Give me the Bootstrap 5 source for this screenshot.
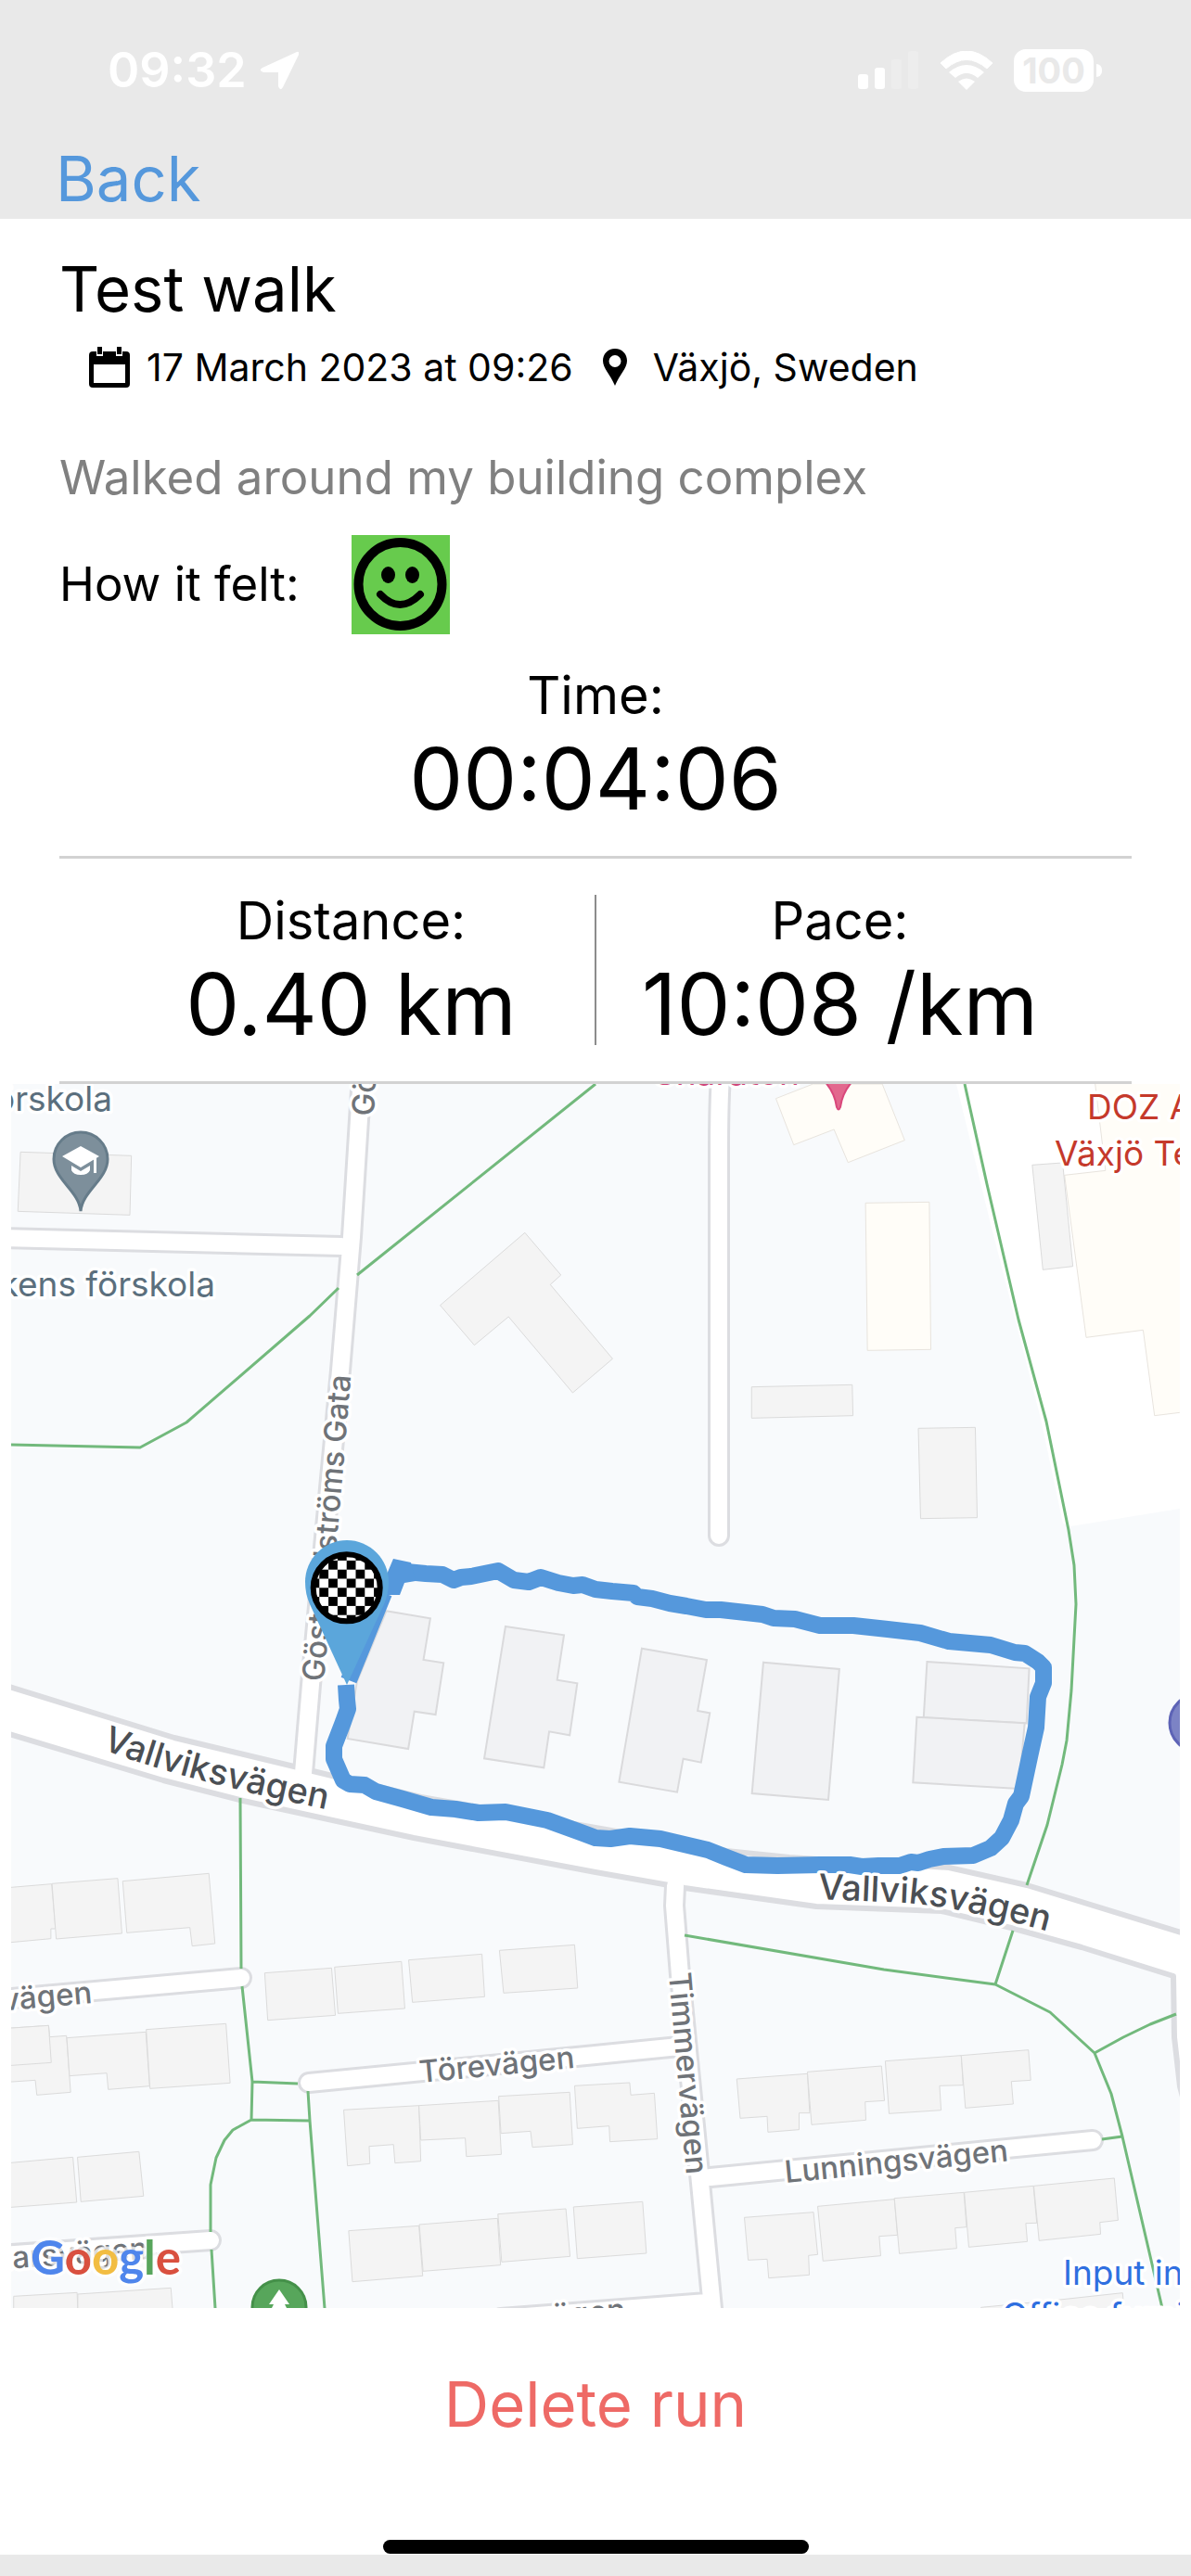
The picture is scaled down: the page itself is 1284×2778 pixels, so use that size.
<!DOCTYPE html>
<html lang="en">
<head>
<meta charset="utf-8">
<meta name="viewport" content="width=device-width, initial-scale=1">
<title>Test walk</title>
<link href="https://cdn.jsdelivr.net/npm/bootstrap@5.3.0/dist/css/bootstrap.min.css" rel="stylesheet">
<style>
  body { font-family: Inter, "Liberation Sans", sans-serif; background: #fff; color: #000; }
  .chrome { background: #e9e9e9; }
  .status-bar { padding: 46px 96px 0 116px; line-height: 60px; font-size: 52px; font-weight: 600; color: #fff; }
  .clock { gap: 14px; }
  .indicators { gap: 22px; }
  .battery { width: 86px; height: 46px; border-radius: 13px; background: #fff; color: #e9e9e9; font-size: 38px; line-height: 46px; font-weight: 700; }
  .battery-tip { width: 6px; height: 14px; border-radius: 0 6px 6px 0; background: #fff; margin-left: 3px; }
  .back-row { padding: 44px 60px 0; }
  .back-link { color: #5598dc; font-size: 67px; line-height: 86px; }
  .run-head { padding: 31px 64px 0; }
  .run-title { font-size: 67px; line-height: 90px; font-weight: 400; margin: 0 0 9px; }
  .run-meta { font-size: 41px; line-height: 60px; padding-left: 32px; }
  .meta-date { margin: 0 32px 0 18px; }
  .meta-place { margin-left: 28px; }
  .run-note { font-size: 51px; line-height: 70px; color: #808080; margin: 54px 0 27px; }
  .felt { font-size: 51px; gap: 56px; }
  .felt-face { width: 106px; height: 107px; background: #67cb4d; }
  .stat-name { font-size: 56px; line-height: 56px; }
  .stat-value { font-size: 92px; line-height: 124px; }
  .time-block { padding-top: 38px; margin-bottom: 21px; }
  .rule { height: 3px; background: #d2d2d2; margin: 0 64px; }
  .split { margin: 39px 116px 21px; }
  .split-line { width: 2px; height: 162px; background: #8c8c8c; }
  .map-frame { padding: 0 12px; }
  .map { display: block; width: 100%; height: auto; background: #f8fafc; font-family: Inter, "Liberation Sans", sans-serif; }
  .casing { fill: none; stroke: #dcdde1; stroke-width: 24; stroke-linecap: round; stroke-linejoin: round; }
  .surface { fill: none; stroke: #fff; stroke-width: 18; stroke-linecap: round; stroke-linejoin: round; }
  .path-green { fill: none; stroke: #72b97c; stroke-width: 3; stroke-linejoin: round; }
  .house polygon { fill: #f4f4f4; stroke: #dbdbdb; stroke-width: 1; vector-effect: non-scaling-stroke; }
  .block polygon { fill: #f1f2f4; stroke: #dadadc; stroke-width: 2; vector-effect: non-scaling-stroke; }
  .shop polygon { fill: #fffdf8; stroke: #e8e4de; stroke-width: 1; vector-effect: non-scaling-stroke; }
  .halo { paint-order: stroke; stroke: #fff; stroke-width: 7; stroke-linejoin: round; }
  .street { font-size: 33px; font-weight: 500; fill: #6f7378; }
  .avenue { font-size: 38px; font-weight: 500; fill: #4b4f54; }
  .place { font-size: 37px; }
  .brand { font-family: Lato, "Liberation Sans", sans-serif; font-size: 51px; font-weight: 700; stroke-opacity: .75; }
  .delete-btn { color: #ee6a66; font-size: 67px; line-height: 100px; margin-top: 54px; }
  .home-bar { width: 459px; height: 15px; border-radius: 8px; background: #000; margin: 96px auto 1px; }
  .bottom-strip { height: 23px; }
</style>
</head>
<body>
<header class="chrome">
  <div class="status-bar d-flex justify-content-between align-items-center">
    <div class="clock d-flex align-items-center">
      <span>09:32</span>
      <svg width="42" height="42" viewBox="0 0 42 42" aria-hidden="true"><path d="M40 1Q43 0 42 4L25 39Q22 44 20 38V23H4Q-2 21 3 18Z" fill="#fff"/></svg>
    </div>
    <div class="indicators d-flex align-items-center">
      <svg width="66" height="42" viewBox="0 0 66 42" aria-hidden="true"><g fill="#fff"><rect x="0" y="25" width="11" height="16" rx="3"/><rect x="18" y="18" width="11" height="23" rx="3"/><g fill="#ededed"><rect x="36" y="9" width="11" height="32" rx="3"/><rect x="54" y="0" width="11" height="41" rx="3"/></g></g></svg>
      <svg width="58" height="42" viewBox="0 0 58 42" aria-hidden="true"><g fill="#fff"><path d="M1 13Q29-13 57 13L51 19Q29 0 7 19Z" stroke="#fff" stroke-width="1"/><path d="M10 23Q29 7 48 23L41 29Q29 19 17 29Z"/><path d="M20 33Q29 26 38 33L29 42Z"/></g></svg>
      <div class="d-flex align-items-center"><div class="battery d-flex justify-content-center">100</div><div class="battery-tip"></div></div>
    </div>
  </div>
  <nav class="back-row d-flex"><a class="back-link text-decoration-none" href="#">Back</a></nav>
</header>
<main>
  <section class="run-head">
    <h1 class="run-title">Test walk</h1>
    <div class="run-meta d-flex align-items-center">
      <svg width="44" height="44" viewBox="0 0 44 44" aria-hidden="true"><path d="M4 5H8V10H15V5H29V10H36V5H40Q44 5 44 9V40Q44 44 40 44H4Q0 44 0 40V9Q0 5 4 5ZM5 19V39H39V19Z" fill-rule="evenodd"/><path d="M9 0H14V8H9ZM30 0H35V8H30Z"/></svg>
      <span class="meta-date">17 March 2023 at 09:26</span>
      <svg width="26" height="40" viewBox="0 0 26 40" aria-hidden="true"><path d="M13 0C5 0 0 6 0 13C0 21 8 28 13 40C18 28 26 21 26 13C26 6 21 0 13 0ZM13 7A6 6 0 1 1 13 20A6 6 0 1 1 13 7Z" fill-rule="evenodd"/></svg>
      <span class="meta-place">Växjö, Sweden</span>
    </div>
    <p class="run-note">Walked around my building complex</p>
    <div class="felt d-flex align-items-center">
      <span>How it felt:</span>
      <svg class="felt-face" viewBox="0 0 106 107" role="img" aria-label="Happy"><circle cx="52.500" cy="53" r="45" fill="none" stroke="#000" stroke-width="10"/><ellipse cx="39.500" cy="43" rx="7.500" ry="9"/><ellipse cx="65.500" cy="43" rx="7.500" ry="9"/><path d="M31 64Q52 86 74 64" fill="none" stroke="#000" stroke-width="8" stroke-linecap="round"/></svg>
    </div>
  </section>
  <section class="time-block text-center">
    <div class="stat-name">Time:</div>
    <div class="stat-value">00:04:06</div>
  </section>
  <div class="rule"></div>
  <section class="split d-flex text-center">
    <div class="flex-fill w-50"><div class="stat-name">Distance:</div><div class="stat-value text-nowrap">0.40 km</div></div>
    <div class="split-line"></div>
    <div class="flex-fill w-50"><div class="stat-name">Pace:</div><div class="stat-value text-nowrap">10:08 /km</div></div>
  </section>
  <div class="rule"></div>
  <section class="map-frame">
    <svg class="map" viewBox="12 1169 1260 1320" role="img" aria-label="Map of the route">
      <defs>
        <pattern id="chequer" x="373.700" y="1712.300" width="19.600" height="19.600" patternUnits="userSpaceOnUse"><rect width="19.600" height="19.600" fill="#fff"/><rect y="9.800" width="9.800" height="9.800"/><rect x="9.800" width="9.800" height="9.800"/></pattern>
        <path id="gata" d="M349 1814Q366 1640 380 1460"/>
        <path id="vall-west" d="M110 1886Q200 1922 400 1961"/>
        <path id="vall-east" d="M882 2048L975 2052Q1040 2056 1170 2094"/>
        <path id="timmer" d="M721 2128L742 2370"/>
        <path id="tore" d="M453 2246L640 2228"/>
        <path id="lunning" d="M847 2354L1120 2327"/>
      </defs>
      <!-- open ground east of the footpath -->
      <polygon fill="#fff" points="1031,1169 1068,1320 1122,1530 1146,1643 1154,1646 1272,1627 1272,1169"/>

      <!-- buildings, one group per map tile -->
      <g transform="translate(0 1150) scale(.40944 .33333)">
        <g class="house"><polygon points="54,277 346,289 342,481 47,469"/><polygon points="1382,538 1477,675 1449,706 1613,946 1508,1056 1339,810 1249,902 1159,773"/></g>
      </g>
      <g transform="translate(642 1150) scale(.40944 .33333)">
        <g class="shop"><polygon points="475,104 573,57 755,57 814,239 665,311 628,204 522,254"/><polygon points="711,442 879,439 883,916 716,919"/><polygon points="1315,50 1343,337 1235,352 1292,877 1442,853 1472,1130 1538,1120 1560,1120 1560,50"/></g>
        <g class="house"><polygon points="411,1037 676,1030 678,1130 411,1138"/><polygon points="850,1171 1000,1168 1005,1460 856,1463"/><polygon points="1150,319 1230,312 1257,647 1178,658"/></g>
      </g>
      <g class="block" transform="translate(0 1600) scale(.40944 .33333)"><polygon points="1017,412 1133,436 1115,570 1168,580 1147,747 1091,737 1075,858 915,825 940,640"/><polygon points="1331,462 1485,490 1467,635 1520,646 1500,814 1446,802 1432,919 1275,889"/></g>
      <g class="block" transform="translate(642 1600) scale(.40944 .33333)"><polygon points="122,533 293,570 269,735 301,742 278,902 231,890 215,998 62,965"/><polygon points="442,578 642,600 613,1023 412,1002"/><polygon points="873,576 1142,598 1135,775 864,757"/><polygon points="846,755 1130,775 1115,987 836,967"/></g>
      <g class="house" transform="translate(0 1600) scale(.40944 .33333)"><polygon points="20,1307 136,1295 146,1440 134,1440 134,1472 20,1485"/><polygon points="137,1294 310,1277 321,1455 148,1473"/><polygon points="323,1286 550,1261 566,1488 506,1496 500,1436 334,1453"/></g>
      <g class="house" transform="translate(0 2050) scale(.40944 .33333)">
        <polygon points="697,233 873,217 883,370 705,386"/><polygon points="881,214 1057,196 1066,348 890,364"/><polygon points="1076,191 1269,172 1276,310 1086,328"/><polygon points="1315,160 1513,142 1521,282 1326,298"/>
        <polygon points="20,412 128,403 131,440 175,436 186,619 97,628 93,580 20,586"/><polygon points="20,412 128,403 135,523 20,533"/><polygon points="176,443 384,424 394,599 285,610 281,557 183,566"/><polygon points="385,416 595,397 606,589 395,607"/>
        <polygon points="20,848 192,829 202,975 20,992"/><polygon points="204,829 366,811 378,955 213,973"/><polygon points="36,1279 203,1267 205,1330 36,1330"/><polygon points="205,1272 450,1252 455,1330 205,1330"/>
        <polygon points="905,676 1103,662 1108,842 1040,848 1036,788 972,794 974,850 915,857"/><polygon points="1103,662 1312,646 1320,820 1228,827 1225,767 1108,774"/><polygon points="1313,632 1500,619 1508,788 1402,797 1397,745 1319,752"/>
        <polygon points="1513,598 1658,588 1661,628 1723,622 1731,770 1606,779 1604,728 1520,736"/>
        <polygon points="918,1067 1103,1051 1113,1213 928,1232"/><polygon points="1104,1047 1310,1027 1318,1178 1114,1198"/><polygon points="1311,1013 1490,996 1501,1150 1321,1168"/><polygon points="1510,990 1692,973 1702,1140 1520,1157"/>
      </g>
      <g class="house" transform="translate(642 2050) scale(.40944 .33333)">
        <polygon points="372,576 558,559 564,686 536,686 536,740 454,748 452,697 381,703"/><polygon points="558,553 753,534 761,646 710,650 712,709 569,724"/><polygon points="763,518 963,500 968,596 906,598 910,677 773,688"/><polygon points="963,500 1140,482 1146,580 1095,584 1100,657 974,670"/>
        <polygon points="392,1024 574,1007 585,1144 561,1147 563,1210 456,1220 452,1159 402,1162"/><polygon points="585,988 787,965 795,1081 747,1085 751,1148 599,1165"/><polygon points="787,962 970,943 977,1055 947,1058 951,1124 800,1141"/><polygon points="971,943 1153,922 1162,1042 1133,1043 1137,1102 983,1120"/><polygon points="1154,922 1366,897 1376,1033 1328,1040 1330,1078 1168,1099"/>
        <polygon points="1015,1315 1208,1292 1388,1268 1392,1330 1015,1330"/>
      </g>

      <!-- roads: casings first, then surfaces -->
      <g class="casing">
        <path d="M390 1160L379 1334L367 1478L335 1817L327 1912M0 1335L368 1344"/><path d="M777 1160Q775 1190 775 1240V1656"/>
        <path d="M728 2034L727 2055L733 2130L755 2354L769 2500M766 2348L1178 2308M333 2246L642 2216L732 2207M0 2156L260 2133M0 2432L227 2416M540 2500L762 2483"/>
        <path fill="#fff" style="stroke-width:6" d="M0 1816L188 1874L317 1905L358 1915L454 1938L642 1971L783 1996L851 2003L1023 2014L1107 2033L1280 2086V2280L1272 2250L1266 2197L1265 2131L1166 2100L1090 2079L1015 2061L880 2056L738 2036L642 2019L446 1982L262 1942L176 1920L0 1867Z"/>
      </g>
      <g class="surface">
        <path d="M390 1160L379 1334L367 1478L335 1817L327 1912M0 1335L368 1344"/><path d="M777 1160Q775 1190 775 1240V1656"/>
        <path d="M728 2034L727 2055L733 2130L755 2354L769 2500M766 2348L1178 2308M333 2246L642 2216L732 2207M0 2156L260 2133M0 2432L227 2416M540 2500L762 2483"/>
      </g>

      <g class="path-green">
        <path d="M1040 1169L1064 1277L1098 1423L1128 1533L1152 1650L1158 1688L1160 1730L1155 1823L1150 1877L1145 1903L1129 1968L1107 2033M1092 2082L1073 2140"/>
        <path d="M642 1169L385 1375M365 1389L334 1419L201 1534L151 1561L12 1558"/>
        <path d="M259 1939L260 2123M261 2142L272 2245L321 2247M272 2245L271 2286L334 2287M332 2255L334 2287L350 2489M271 2286L251 2297L242 2308L233 2327L227 2356L227 2407M228 2426L232 2489"/>
        <path d="M738 2087L953 2124L1073 2140L1132 2170L1180 2214L1198 2258L1210 2304L1253 2489M1180 2214L1211 2197L1240 2183L1268 2172M1188 2307L1210 2304"/>
      </g>

      <!-- recorded route -->
      <g fill="none" stroke="#5598dc" stroke-width="18" stroke-linejoin="round">
        <path d="M376 1812L414 1718M438 1695L459 1697L477 1698L489 1704L497 1701L508 1700L537 1694L554 1704L570 1706L583 1701L602 1707L618 1710L628 1709L642 1714L660 1716L683 1718L687 1722L703 1724L722 1729L740 1732L761 1736L777 1736L822 1741L834 1745L857 1746L884 1753L920 1753L957 1757L992 1761L1023 1770L1068 1774L1094 1782L1105 1783L1119 1792L1125 1798L1125 1815L1119 1830L1117 1863L1111 1890L1101 1937L1095 1945L1090 1963L1080 1982L1068 1993L1049 2001L1017 2002L1002 2005L990 2009L982 2008L970 2012L947 2012L929 2013L916 2011L884 2011L838 2012L804 2011L783 2003L763 1995L712 1983L679 1980L658 1983L642 1982L626 1976L590 1963L545 1954L516 1955L491 1951L465 1949L434 1940L405 1932L393 1925L377 1924L370 1920L360 1897L360 1883L370 1857L375 1843L374 1833L373 1817"/>
        <path fill="#5598dc" stroke="none" d="M424 1681L443 1685L448 1705L436 1707L431 1720H416V1700Z"/>
      </g>

      <!-- labels -->
      <g class="halo street">
        <text><textPath href="#gata">Gösta Edströms Gata</textPath></text>
        <text transform="translate(403 1204) rotate(-87)">Göst</text>
        <text><textPath href="#timmer">Timmervägen</textPath></text>
        <text><textPath href="#tore">Törevägen</textPath></text>
        <text><textPath href="#lunning">Lunningsvägen</textPath></text>
        <text transform="translate(100 2160) rotate(-5)" text-anchor="end">vägen</text>
        <text transform="translate(160 2436) rotate(-4)" text-anchor="end">marsvägen</text>
        <text transform="translate(675 2502) rotate(-5)" text-anchor="end">vägen</text>
      </g>
      <g class="halo avenue">
        <text><textPath href="#vall-west">Vallviksvägen</textPath></text>
        <text><textPath href="#vall-east">Vallviksvägen</textPath></text>
      </g>
      <g class="halo place">
        <text x="121" y="1198" text-anchor="end" fill="#5b6f7d">förskola</text>
        <text x="232" y="1398" text-anchor="end" fill="#5b6f7d">kens förskola</text>
        <text x="1172" y="1207" fill="#c5392b">DOZ Apotek</text>
        <text x="1137" y="1257" fill="#c5392b">Växjö Teleborg</text>
        <text x="705" y="1170" fill="#d0457a">Sharaton</text>
        <text x="1146" y="2464" fill="#2f6fe0">Input interiör</text>
        <text x="1080" y="2510" fill="#2f6fe0">Office furniture</text>
      </g>

      <!-- place pins -->
      <path d="M87 1306C85 1284 58 1272 58 1250A29 29 0 0 1 116 1250C116 1272 89 1284 87 1306Z" fill="#7d8f9b" stroke="#667c8a" stroke-width="3"/>
      <path d="M67 1247L87 1236L107 1247L87 1259ZM77 1257L87 1263L97 1257V1262Q95 1267 87 1267Q79 1267 77 1262ZM101 1249H104V1265H101Z" fill="#fff"/>
      <path d="M888 1165Q900 1178 902 1194Q904 1199 906 1194Q908 1178 920 1165Z" fill="#e2688e" stroke="#d9477b" stroke-width="2"/>
      <circle cx="301" cy="2488" r="29" fill="#57a65b" stroke="#449049" stroke-width="3"/>
      <path d="M301 2469L312 2485H307L312 2495H290L295 2485H290Z" fill="#fff"/>
      <circle cx="1292" cy="1858" r="31" fill="#7c83c5" stroke="#5d63b6" stroke-width="3"/>

      <!-- finish marker -->
      <path d="M374 1817L334 1730Q329 1719 329 1706A45 45 0 0 1 419 1706Q419 1719 414 1730Z" fill="#5ba6db"/>
      <circle cx="373.700" cy="1712.300" r="36" fill="url(#chequer)" stroke="#000" stroke-width="6"/>

      <text class="halo brand" x="33" y="2453"><tspan fill="#4f86ec">G</tspan><tspan fill="#d9503f">o</tspan><tspan fill="#f2bd42">o</tspan><tspan fill="#4f86ec">g</tspan><tspan fill="#58a55c">l</tspan><tspan fill="#d9503f">e</tspan></text>
    </svg>
  </section>
  <div class="text-center"><button type="button" class="delete-btn btn border-0 p-0 rounded-0">Delete run</button></div>
</main>
<footer>
  <div class="home-bar"></div>
  <div class="bottom-strip chrome"></div>
</footer>
<script src="https://cdn.jsdelivr.net/npm/bootstrap@5.3.0/dist/js/bootstrap.bundle.min.js"></script>
</body>
</html>
